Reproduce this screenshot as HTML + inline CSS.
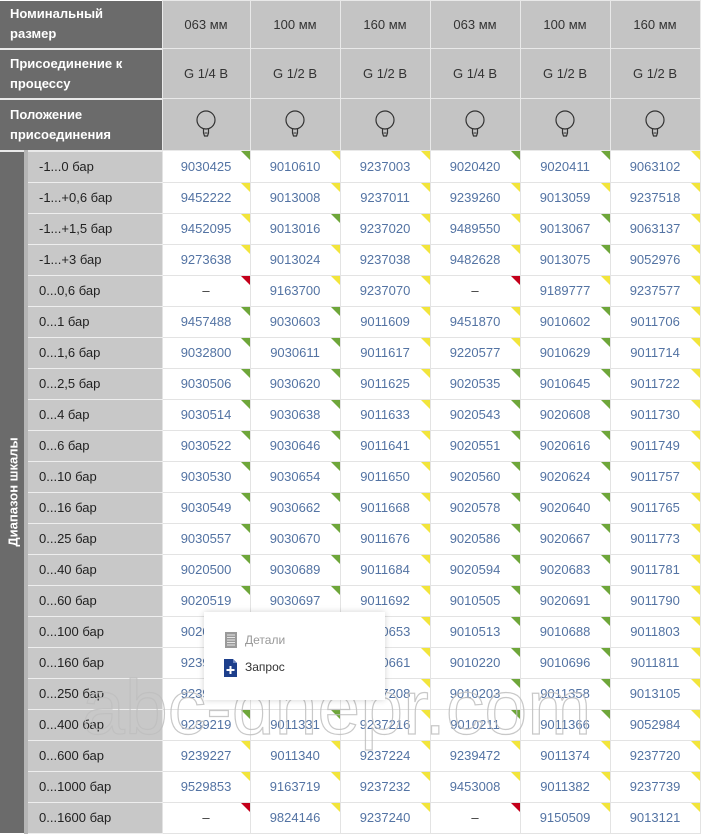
<!DOCTYPE html>
<html><head><meta charset="utf-8"><style>
body{margin:0;width:705px;height:833px;overflow:hidden;background:#fff;font-family:"Liberation Sans",Arial,sans-serif;position:relative}
table{border-collapse:collapse;table-layout:fixed;position:absolute;left:0;top:0;width:700px}
td{padding:0;font-size:13px;text-align:center;position:relative}
.hl{background:#6b6b6b;color:#fff;font-weight:bold;text-align:left;padding-left:10px;line-height:20px;border-bottom:2px solid #e9e9e9;border-right:1px solid #e9e9e9}
.hv{background:#c4c4c4;color:#333;border:1px solid #e9e9e9}
.vl{background:#6b6b6b;border-right:4px solid #b5b5b5;width:24px}
.rl{background:#c8c8c8;color:#222;text-align:left;padding-left:11px;border-bottom:1px solid #eee}
.d{color:#5373a3;border:1px solid #e3e3e3;background:#fff}
tr.r td{height:30px}
.d::after{content:"";position:absolute;right:0;top:0;width:0;height:0;border-style:solid;border-width:0 9px 9px 0;border-color:transparent}
.d.g::after{border-right-color:#6ea63a}
.d.y::after{border-right-color:#f2e53b}
.d.x::after{border-right-color:#c4001a}
.vt{position:absolute;left:0;top:437px;width:26px;height:110px}
.vt span{position:absolute;left:50%;top:50%;transform:translate(-50%,-50%) rotate(-90deg);white-space:nowrap;color:#fff;font-weight:bold;font-size:13px}
.pop{position:absolute;left:204px;top:612px;width:181px;height:88px;background:#fff;box-shadow:0 0 6px rgba(0,0,0,.18);font-size:12px}
.wm{position:absolute;left:82px;top:670px;font-size:77px;line-height:1;color:transparent;-webkit-text-stroke:1.2px rgba(190,190,190,.85);white-space:nowrap}
svg.b{display:block;margin:0 auto}
</style></head><body>
<table>
<colgroup><col style="width:26px"><col style="width:136px"><col style="width:88px"><col style="width:90px"><col style="width:90px"><col style="width:90px"><col style="width:90px"><col style="width:90px"></colgroup>
<tr style="height:48px"><td class="hl" colspan="2">Номинальный<br>размер</td><td class="hv">063 мм</td><td class="hv">100 мм</td><td class="hv">160 мм</td><td class="hv">063 мм</td><td class="hv">100 мм</td><td class="hv">160 мм</td></tr>
<tr style="height:50px"><td class="hl" colspan="2">Присоединение к<br>процессу</td><td class="hv">G 1/4 B</td><td class="hv">G 1/2 B</td><td class="hv">G 1/2 B</td><td class="hv">G 1/4 B</td><td class="hv">G 1/2 B</td><td class="hv">G 1/2 B</td></tr>
<tr style="height:52px"><td class="hl" colspan="2">Положение<br>присоединения</td>
<td class="hv"><svg class="b" width="22" height="30" viewBox="0 0 22 30"><circle cx="11" cy="10" r="9" fill="none" stroke="#333" stroke-width="1.2"/><path d="M8.5 18.5 L8.5 23 L9.5 26 L12.5 26 L13.5 23 L13.5 18.5" fill="none" stroke="#333" stroke-width="1.2"/><path d="M9.5 23h3" stroke="#333"/></svg></td>
<td class="hv"><svg class="b" width="22" height="30" viewBox="0 0 22 30"><circle cx="11" cy="10" r="9" fill="none" stroke="#333" stroke-width="1.2"/><path d="M8.5 18.5 L8.5 23 L9.5 26 L12.5 26 L13.5 23 L13.5 18.5" fill="none" stroke="#333" stroke-width="1.2"/><path d="M9.5 23h3" stroke="#333"/></svg></td>
<td class="hv"><svg class="b" width="22" height="30" viewBox="0 0 22 30"><circle cx="11" cy="10" r="9" fill="none" stroke="#333" stroke-width="1.2"/><path d="M8.5 18.5 L8.5 23 L9.5 26 L12.5 26 L13.5 23 L13.5 18.5" fill="none" stroke="#333" stroke-width="1.2"/><path d="M9.5 23h3" stroke="#333"/></svg></td>
<td class="hv"><svg class="b" width="22" height="30" viewBox="0 0 22 30"><circle cx="11" cy="10" r="9" fill="none" stroke="#333" stroke-width="1.2"/><path d="M8.5 18.5 L8.5 23 L9.5 26 L12.5 26 L13.5 23 L13.5 18.5" fill="none" stroke="#333" stroke-width="1.2"/><path d="M9.5 23h3" stroke="#333"/></svg></td>
<td class="hv"><svg class="b" width="22" height="30" viewBox="0 0 22 30"><circle cx="11" cy="10" r="9" fill="none" stroke="#333" stroke-width="1.2"/><path d="M8.5 18.5 L8.5 23 L9.5 26 L12.5 26 L13.5 23 L13.5 18.5" fill="none" stroke="#333" stroke-width="1.2"/><path d="M9.5 23h3" stroke="#333"/></svg></td>
<td class="hv"><svg class="b" width="22" height="30" viewBox="0 0 22 30"><circle cx="11" cy="10" r="9" fill="none" stroke="#333" stroke-width="1.2"/><path d="M8.5 18.5 L8.5 23 L9.5 26 L12.5 26 L13.5 23 L13.5 18.5" fill="none" stroke="#333" stroke-width="1.2"/><path d="M9.5 23h3" stroke="#333"/></svg></td></tr>
<tr class="r"><td class="vl" rowspan="22"></td><td class="rl">-1...0 бар</td><td class="d g">9030425</td><td class="d y">9010610</td><td class="d y">9237003</td><td class="d g">9020420</td><td class="d g">9020411</td><td class="d y">9063102</td></tr>
<tr class="r"><td class="rl">-1...+0,6 бар</td><td class="d y">9452222</td><td class="d y">9013008</td><td class="d y">9237011</td><td class="d y">9239260</td><td class="d y">9013059</td><td class="d y">9237518</td></tr>
<tr class="r"><td class="rl">-1...+1,5 бар</td><td class="d y">9452095</td><td class="d g">9013016</td><td class="d y">9237020</td><td class="d y">9489550</td><td class="d g">9013067</td><td class="d y">9063137</td></tr>
<tr class="r"><td class="rl">-1...+3 бар</td><td class="d y">9273638</td><td class="d y">9013024</td><td class="d y">9237038</td><td class="d y">9482628</td><td class="d g">9013075</td><td class="d y">9052976</td></tr>
<tr class="r"><td class="rl">0...0,6 бар</td><td class="d x" style="color:#333">–</td><td class="d y">9163700</td><td class="d y">9237070</td><td class="d x" style="color:#333">–</td><td class="d y">9189777</td><td class="d y">9237577</td></tr>
<tr class="r"><td class="rl">0...1 бар</td><td class="d g">9457488</td><td class="d g">9030603</td><td class="d y">9011609</td><td class="d y">9451870</td><td class="d g">9010602</td><td class="d y">9011706</td></tr>
<tr class="r"><td class="rl">0...1,6 бар</td><td class="d g">9032800</td><td class="d g">9030611</td><td class="d y">9011617</td><td class="d y">9220577</td><td class="d g">9010629</td><td class="d y">9011714</td></tr>
<tr class="r"><td class="rl">0...2,5 бар</td><td class="d g">9030506</td><td class="d g">9030620</td><td class="d y">9011625</td><td class="d g">9020535</td><td class="d g">9010645</td><td class="d y">9011722</td></tr>
<tr class="r"><td class="rl">0...4 бар</td><td class="d g">9030514</td><td class="d g">9030638</td><td class="d y">9011633</td><td class="d g">9020543</td><td class="d g">9020608</td><td class="d y">9011730</td></tr>
<tr class="r"><td class="rl">0...6 бар</td><td class="d g">9030522</td><td class="d g">9030646</td><td class="d y">9011641</td><td class="d g">9020551</td><td class="d g">9020616</td><td class="d y">9011749</td></tr>
<tr class="r"><td class="rl">0...10 бар</td><td class="d g">9030530</td><td class="d g">9030654</td><td class="d y">9011650</td><td class="d g">9020560</td><td class="d g">9020624</td><td class="d y">9011757</td></tr>
<tr class="r"><td class="rl">0...16 бар</td><td class="d g">9030549</td><td class="d g">9030662</td><td class="d y">9011668</td><td class="d g">9020578</td><td class="d g">9020640</td><td class="d y">9011765</td></tr>
<tr class="r"><td class="rl">0...25 бар</td><td class="d g">9030557</td><td class="d g">9030670</td><td class="d y">9011676</td><td class="d g">9020586</td><td class="d g">9020667</td><td class="d y">9011773</td></tr>
<tr class="r"><td class="rl">0...40 бар</td><td class="d g">9020500</td><td class="d g">9030689</td><td class="d y">9011684</td><td class="d g">9020594</td><td class="d g">9020683</td><td class="d y">9011781</td></tr>
<tr class="r"><td class="rl">0...60 бар</td><td class="d g">9020519</td><td class="d g">9030697</td><td class="d y">9011692</td><td class="d g">9010505</td><td class="d g">9020691</td><td class="d y">9011790</td></tr>
<tr class="r"><td class="rl">0...100 бар</td><td class="d g">9020527</td><td class="d g">9030700</td><td class="d y">9010653</td><td class="d g">9010513</td><td class="d g">9010688</td><td class="d y">9011803</td></tr>
<tr class="r"><td class="rl">0...160 бар</td><td class="d g">9239200</td><td class="d g">9011300</td><td class="d y">9010661</td><td class="d g">9010220</td><td class="d g">9010696</td><td class="d y">9011811</td></tr>
<tr class="r"><td class="rl">0...250 бар</td><td class="d g">9239210</td><td class="d g">9011320</td><td class="d y">9237208</td><td class="d g">9010203</td><td class="d g">9011358</td><td class="d y">9013105</td></tr>
<tr class="r"><td class="rl">0...400 бар</td><td class="d g">9239219</td><td class="d g">9011331</td><td class="d y">9237216</td><td class="d g">9010211</td><td class="d g">9011366</td><td class="d y">9052984</td></tr>
<tr class="r"><td class="rl">0...600 бар</td><td class="d y">9239227</td><td class="d y">9011340</td><td class="d y">9237224</td><td class="d y">9239472</td><td class="d y">9011374</td><td class="d y">9237720</td></tr>
<tr class="r"><td class="rl">0...1000 бар</td><td class="d y">9529853</td><td class="d y">9163719</td><td class="d y">9237232</td><td class="d y">9453008</td><td class="d y">9011382</td><td class="d y">9237739</td></tr>
<tr class="r"><td class="rl">0...1600 бар</td><td class="d x" style="color:#333">–</td><td class="d y">9824146</td><td class="d y">9237240</td><td class="d x" style="color:#333">–</td><td class="d y">9150509</td><td class="d y">9013121</td></tr>
</table>
<div class="vt"><span>Диапазон шкалы</span></div>
<div class="wm">abc-dnepr.com</div>
<div class="pop">
<svg style="position:absolute;left:21px;top:20px" width="12" height="16" viewBox="0 0 12 16"><rect x="0" y="0" width="12" height="16" fill="#9a9a9a"/><path d="M2 3h8M2 5.5h8M2 8h8M2 10.5h8M2 13h8" stroke="#e6e6e6" stroke-width="1"/></svg>
<div style="position:absolute;left:41px;top:21px;color:#999">Детали</div>
<svg style="position:absolute;left:20px;top:47px" width="13" height="18" viewBox="0 0 13 18"><path d="M0 0h9l4 4v14H0z" fill="#1d3f8c"/><path d="M9 0v4h4" fill="#6e86c0"/><path d="M6.5 7v8M2.5 11h8" stroke="#fff" stroke-width="2"/></svg>
<div style="position:absolute;left:41px;top:48px;color:#333">Запрос</div>
</div>
</body></html>
